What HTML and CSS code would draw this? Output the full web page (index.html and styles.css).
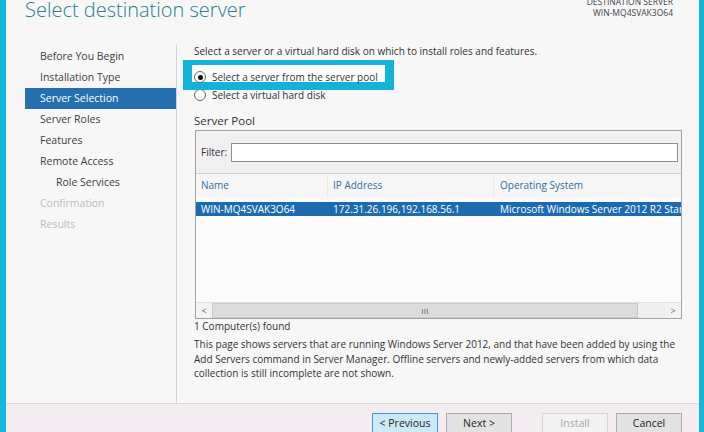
FILE: index.html
```html
<!DOCTYPE html>
<html>
<head>
<meta charset="utf-8">
<link rel="stylesheet" href="styles.css">
</head>
<body>
<div class="screen">
  <div class="edge edge-left"></div>
  <div class="window">
    <div class="header">
      <div class="title">Select destination server</div>
      <div class="dest">
        <div class="dest-label">DESTINATION SERVER</div>
        <div class="dest-name">WIN-MQ4SVAK3O64</div>
      </div>
    </div>
    <div class="main">
      <div class="sidebar">
        <div class="nav-item">Before You Begin</div>
        <div class="nav-item">Installation Type</div>
        <div class="nav-item active">Server Selection</div>
        <div class="nav-item">Server Roles</div>
        <div class="nav-item">Features</div>
        <div class="nav-item">Remote Access</div>
        <div class="nav-item sub">Role Services</div>
        <div class="nav-item disabled">Confirmation</div>
        <div class="nav-item disabled">Results</div>
      </div>
      <div class="content">
        <div class="annot"></div>
        <div class="intro">Select a server or a virtual hard disk on which to install roles and features.</div>
        <div class="radio-row first"><span class="radio checked"></span><span>Select a server from the server pool</span></div>
        <div class="radio-row second"><span class="radio"></span><span>Select a virtual hard disk</span></div>
        <div class="pool-label">Server Pool</div>
        <div class="pool">
          <div class="filter-row">
            <span class="filter-label">Filter:</span>
            <div class="filter-input"></div>
          </div>
          <div class="cols head">
            <div class="c1">Name</div>
            <div class="c2">IP Address</div>
            <div class="c3">Operating System</div>
          </div>
          <div class="cols row selected">
            <div class="c1">WIN-MQ4SVAK3O64</div>
            <div class="c2">172.31.26.196,192.168.56.1</div>
            <div class="c3">Microsoft Windows Server 2012 R2 Standard</div>
          </div>
          <div class="list-space"></div>
          <div class="hscroll">
            <div class="sb-btn">&lt;</div>
            <div class="sb-thumb">III</div>
            <div class="sb-track"></div>
            <div class="sb-btn">&gt;</div>
          </div>
        </div>
        <div class="found">1 Computer(s) found</div>
        <p class="note">This page shows servers that are running Windows Server 2012, and that have been added by using the Add Servers command in Server Manager. Offline servers and newly-added servers from which data collection is still incomplete are not shown.</p>
      </div>
    </div>
    <div class="footer">
      <div class="btn primary">&lt; Previous</div>
      <div class="btn">Next &gt;</div>
      <div class="btn disabled gap">Install</div>
      <div class="btn">Cancel</div>
    </div>
  </div>
  <div class="edge edge-right"></div>
</div>
</body>
</html>
```

FILE: styles.css
```css
* { box-sizing: border-box; }
html, body { margin: 0; padding: 0; }
body {
  width: 704px;
  height: 432px;
  overflow: hidden;
  font-family: "Open Sans", "Noto Sans", sans-serif;
  font-size: 10px;
  color: #333;
  background: #f7f7f7;
}
.screen {
  display: flex;
  width: 704px;
  height: 432px;
}
.edge { background: #14b6de; flex: none; }
.edge-left { width: 6px; }
.edge-right { width: 5px; }
.window {
  flex: 1;
  display: flex;
  flex-direction: column;
  background: #f7f7f7;
  min-width: 0;
}
.header {
  height: 44px;
  flex: none;
  display: flex;
  justify-content: space-between;
  padding: 0 26px 0 19px;
}
.title {
  font-size: 20px;
  font-weight: 300;
  color: #2b7c8c;
  line-height: 24px;
  margin-top: -2px;
}
.dest {
  text-align: right;
  font-size: 8.5px;
  color: #444;
  line-height: 11px;
  margin-top: -4px;
}
.main {
  flex: 1;
  display: flex;
  min-height: 0;
}
.sidebar {
  width: 170px;
  flex: none;
  padding-top: 2px;
  padding-left: 19px;
}
.nav-item {
  height: 21px;
  line-height: 21px;
  padding-left: 15px;
  color: #404040;
  font-size: 10.5px;
  white-space: nowrap;
}
.nav-item.active { background: #2670b2; color: #fff; }
.nav-item.sub { padding-left: 31px; }
.nav-item.disabled { color: #bdbdbd; }
.content {
  flex: 1;
  border-left: 1px solid #d6d6d6;
  padding: 0 18px 0 17px;
  position: relative;
  min-width: 0;
}
.intro {
  height: 13px;
  line-height: 13px;
  margin-top: 1px;
}
.annot {
  position: absolute;
  left: 6px;
  top: 16px;
  width: 211px;
  height: 30px;
  background: #fff;
  border-style: solid;
  border-color: #13b3d9;
  border-width: 5px 9px 8px 9px;
  z-index: 1;
}
.radio-row {
  display: flex;
  align-items: center;
  height: 16px;
  gap: 6px;
}
.radio-row.first {
  margin-top: 11px;
  position: relative;
  z-index: 2;
}
.radio-row.second { margin-top: 2px; }
.radio {
  width: 12px;
  height: 12px;
  border-radius: 50%;
  border: 1px solid #6a6a6a;
  background: #fff;
  position: relative;
  flex: none;
}
.radio.checked::after {
  content: "";
  position: absolute;
  left: 2.5px;
  top: 2.5px;
  width: 5px;
  height: 5px;
  border-radius: 50%;
  background: #111;
}
.pool-label {
  margin-top: 10px;
  height: 16px;
  line-height: 16px;
  font-size: 11.5px;
}
.pool {
  margin-top: 1px;
  margin-left: 1px;
  width: 487px;
  border: 1px solid #a3a3a3;
  background: #fbfbfb;
  display: flex;
  flex-direction: column;
}
.filter-row {
  height: 43px;
  background: #f1eff1;
  border-bottom: 1px solid #cfcfcf;
  display: flex;
  align-items: center;
  padding-left: 5px;
  gap: 4px;
}
.filter-input {
  width: 447px;
  height: 19px;
  border: 1px solid #8e8e8e;
  background: #fff;
  margin-top: 1px;
}
.cols {
  display: flex;
  white-space: nowrap;
  overflow: hidden;
}
.cols > div { flex: none; overflow: hidden; }
.c1 { width: 132px; padding-left: 5px; }
.c2 { width: 166px; padding-left: 5px; }
.cols > .c3 { flex: 1; padding-left: 6px; }
.head {
  height: 23px;
  line-height: 22px;
  color: #2f6f9f;
  background: #f6f6f6;
}
.head .c1, .head .c2 { border-right: 1px solid #ebebeb; }
.row.selected {
  margin-top: 5px;
  height: 14px;
  line-height: 14px;
  background: #1c6bb0;
  color: #fff;
}
.list-space { flex: none; height: 86px; }
.hscroll {
  height: 16px;
  flex: none;
  display: flex;
  background: #ececec;
  border-top: 1px solid #e0e0e0;
  color: #666;
}
.sb-btn {
  width: 16px;
  text-align: center;
  line-height: 15px;
  font-size: 9px;
  background: #f3f3f3;
}
.sb-thumb {
  width: 426px;
  background: #dcdcdc;
  border: 1px solid #cbcbcb;
  text-align: center;
  font-size: 8px;
  line-height: 13px;
  color: #555;
  letter-spacing: 0.3px;
}
.sb-track { flex: 1; background: #efefef; }
.found {
  height: 14px;
  line-height: 14px;
}
.note {
  margin: 4px 0 0 0;
  line-height: 14.5px;
}
.footer {
  height: 29px;
  flex: none;
  background: #f3edf1;
  border-top: 1px solid #d9d9d9;
  display: flex;
  justify-content: flex-end;
  padding: 9px 17px 0 0;
  gap: 8px;
}
.btn {
  width: 66px;
  height: 22px;
  border: 1px solid #adadad;
  background: #e2e2e2;
  text-align: center;
  line-height: 19px;
  font-size: 10.5px;
  color: #222;
}
.btn.primary { background: #cde8f7; border-color: #3d9bd4; }
.btn.disabled { background: #f3f3f3; border-color: #d5d5d5; color: #a8a8a8; }
.btn.gap { margin-left: 22px; }
```
